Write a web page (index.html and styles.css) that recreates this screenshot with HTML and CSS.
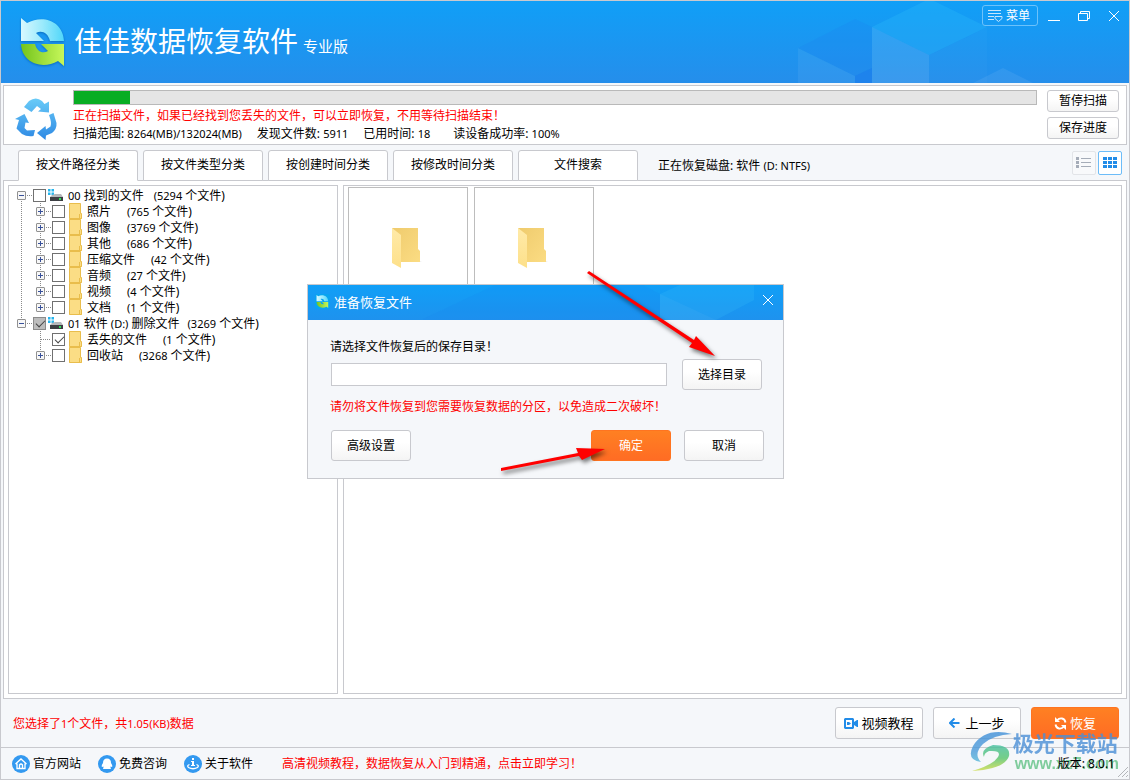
FILE: index.html
```html
<!DOCTYPE html>
<html lang="zh-CN">
<head>
<meta charset="utf-8">
<title>佳佳数据恢复软件</title>
<link rel="stylesheet" href="styles.css">
</head>
<body>
<svg class="defs" width="0" height="0" aria-hidden="true">
  <defs>
    <linearGradient id="g-blue" x1="0" y1="0" x2="1" y2="0"><stop offset="0" stop-color="#d8f8ff"/><stop offset=".5" stop-color="#9beafc"/><stop offset="1" stop-color="#4fd6fa"/></linearGradient>
    <linearGradient id="g-green" x1="0" y1="0" x2="1" y2="0"><stop offset="0" stop-color="#74c41c"/><stop offset="1" stop-color="#c6f75a"/></linearGradient>
    <linearGradient id="g-rec" gradientUnits="userSpaceOnUse" x1="0" y1="0" x2="0" y2="41"><stop offset="0" stop-color="#6accf8"/><stop offset="1" stop-color="#2f8ae4"/></linearGradient>
    <linearGradient id="g-fold" x1="0" y1="0" x2="1" y2="1"><stop offset="0" stop-color="#efcb6d"/><stop offset="1" stop-color="#fbdc83"/></linearGradient>
    <linearGradient id="g-flap" x1="0" y1="0" x2="0" y2="1"><stop offset="0" stop-color="#ffeaa8"/><stop offset="1" stop-color="#fde08a"/></linearGradient>
    <linearGradient id="g-wm" x1="0" y1="0" x2="0" y2="1"><stop offset="0" stop-color="#3f8fd8"/><stop offset=".6" stop-color="#4a9ada"/><stop offset="1" stop-color="#58b8d8"/></linearGradient>
    <linearGradient id="g-wm2" x1="0" y1="0" x2="0" y2="1"><stop offset="0" stop-color="#45bfa0"/><stop offset=".5" stop-color="#55c46c"/><stop offset="1" stop-color="#cfdc45"/></linearGradient>
    <symbol id="logo" viewBox="0 0 44 48">
      <path fill="url(#g-blue)" d="M0 0L6 5C22-4 42 3 43 23H29C27 14 20 12 15 15L23 23H0Z"/>
      <path fill="url(#g-green)" d="M43 48L37 43C21 52 1 45 0 26H14C16 34 22 36 27 33L20 26H43Z"/>
    </symbol>
    <symbol id="folder" viewBox="0 0 13 16">
      <path fill="#fbdd85" d="M0 0H11.500V10L13 11V16H0Z"/><path fill="none" stroke="#e9bd4c" d="M.5 .5H11.500V10.500H12.500V15.500H.5ZM10.500 15V11"/>
    </symbol>
    <symbol id="drive" viewBox="0 0 16 14">
      <path fill="#25b5ee" d="M0 1h2.500v2.500H0zM3.500 1H6v2.500H3.500zM0 4.500h2.500V7H0zM3.500 4.500H6V7H3.500z"/>
      <path fill="#b5b7ba" d="M4 7L7 6H13L15 9H2Z"/><path fill="#3c3f43" d="M2 9h13v4H2z"/><path fill="#2be35a" d="M11 10h2v2h-2z"/>
    </symbol>
    <symbol id="bigfolder" viewBox="0 0 30 42">
      <path fill="url(#g-fold)" d="M0 0H26V21L28 23V34H8Z"/><path fill="url(#g-flap)" d="M0 0L9 7V40L0 35Z"/><path fill="#eee" d="M28 33h2l-2 1z"/>
    </symbol>
  </defs>
</svg>
<div class="window">
  <header class="titlebar">
    <svg class="cubes" width="260" height="82" viewBox="797 1 260 82" aria-hidden="true">
      <path fill="#1c7ff0" fill-opacity=".2" d="M798 48L855 19L872 27V68L855 76Z"/>
      <path fill="#fff" fill-opacity=".06" d="M798 48L855 76V83H798Z"/>
      <path fill="#1670ee" fill-opacity=".4" d="M855 76L872 68V83H855Z"/>
      <path fill="#28b8f8" fill-opacity=".35" d="M872 27L925 1H934L987 27L929 55Z"/>
      <path fill="#fff" fill-opacity=".1" d="M872 27L929 55V83H872Z"/>
      <path fill="#fff" fill-opacity=".02" d="M929 55L987 27V83H929Z"/>
      <path fill="#fff" fill-opacity=".07" d="M973 83L1003 68L1033 83Z"/>
    </svg>
    <svg class="logo" width="44" height="48" aria-hidden="true"><use href="#logo"/></svg>
    <h1 class="brand">佳佳数据恢复软件</h1>
    <span class="edition">专业版</span>
    <div class="window-tools">
      <button class="menu-btn"><svg width="16" height="14" viewBox="0 0 16 14" fill="none" stroke="#c9e6fc"><path d="M0 1.500H13M0 4.500H13M0 7.500H6M0 10.500H6M7 7.500H14V9.500L10.500 12.500L7 9.500Z"/></svg>菜单</button>
      <button class="win-btn" aria-label="最小化"><svg width="12" height="12" stroke="#fff"><path d="M0 10.500H12"/></svg></button>
      <button class="win-btn" aria-label="还原"><svg width="12" height="12" fill="none" stroke="#fff"><path d="M.5 3.500H9.500V10.500H.5ZM2.500 3V1.500H11.500V8.500H10"/></svg></button>
      <button class="win-btn" aria-label="关闭"><svg width="12" height="12" stroke="#fff"><path d="M1 1L11 11M11 1L1 11"/></svg></button>
    </div>
  </header>

  <section class="scan">
    <svg class="recycle" width="44" height="44" viewBox="0 0 44 44" fill="url(#g-rec)" aria-hidden="true">
      <path d="M9 9L14 3Q21-2 27 3L29.500 6L34 3.500V14.500L23 13.500L26 11L22 8L16.500 14Z"/>
      <path d="M0 21L9.500 16L14 25L10.500 24.500L9.500 30L12 32.500L20 32L18.500 38Q12 39 7 36L1.500 30.500L4 22Z"/>
      <path d="M34 17L38.500 15L41.500 25Q42 31 37 35L31 37.500L30.500 42L22 35L30.500 28L31 31.500L35.500 28.500Q37 25 34 17Z"/>
    </svg>
    <div class="scan-info">
      <div class="progress" role="progressbar" aria-label="扫描进度" aria-valuenow="6"><div class="progress-fill" style="width:5.8%"></div></div>
      <p class="alert">正在扫描文件，如果已经找到您丢失的文件，可以立即恢复，不用等待扫描结束！</p>
      <p class="stats"><span>扫描范围: <span class="num">8264(MB)/132024(MB)</span></span><span>发现文件数: <span class="num">5911</span></span><span>已用时间: <span class="num">18</span></span><span class="rate">读设备成功率: <span class="num">100%</span></span></p>
    </div>
    <div class="scan-actions"><button class="btn small">暂停扫描</button><button class="btn small">保存进度</button></div>
  </section>

  <nav class="tabs">
    <button class="tab active">按文件路径分类</button><button class="tab">按文件类型分类</button><button class="tab">按创建时间分类</button><button class="tab">按修改时间分类</button><button class="tab">文件搜索</button>
    <span class="disk">正在恢复磁盘: 软件 <span class="num">(D: NTFS)</span></span>
    <button class="view" aria-label="列表"><svg width="16" height="12" fill="#a5acb8"><path d="M0 0h3v3H0zM0 4h3v3H0zM0 8h3v3H0zM5 1h10v1H5zM5 5h10v1H5zM5 9h10v1H5z"/></svg></button>
    <button class="view on" aria-label="网格"><svg width="14" height="12" fill="#228ce8"><path d="M0 0h4v3H0zM5 0h4v3H5zM10 0h4v3h-4zM0 4h4v3H0zM5 4h4v3H5zM10 4h4v3h-4zM0 8h4v3H0zM5 8h4v3H5zM10 8h4v3h-4z"/></svg></button>
  </nav>

  <main class="content">
    <div class="tree">
      <ul class="roots">
        <li>
          <div class="row"><button class="exp" aria-label="折叠"></button><i class="dots"></i><label><input type="checkbox"><svg class="drive" width="16" height="14"><use href="#drive"/></svg><span class="name"><span class="num">00</span> 找到的文件</span><span class="count"><span class="num">(5294</span> 个文件)</span></label></div>
          <ul class="kids">
            <li class="row"><button class="exp plus" aria-label="展开"></button><i class="dots"></i><label><input type="checkbox"><svg width="13" height="16"><use href="#folder"/></svg><span class="name">照片</span><span class="count"><span class="num">(765</span> 个文件)</span></label></li>
            <li class="row"><button class="exp plus" aria-label="展开"></button><i class="dots"></i><label><input type="checkbox"><svg width="13" height="16"><use href="#folder"/></svg><span class="name">图像</span><span class="count"><span class="num">(3769</span> 个文件)</span></label></li>
            <li class="row"><button class="exp plus" aria-label="展开"></button><i class="dots"></i><label><input type="checkbox"><svg width="13" height="16"><use href="#folder"/></svg><span class="name">其他</span><span class="count"><span class="num">(686</span> 个文件)</span></label></li>
            <li class="row"><button class="exp plus" aria-label="展开"></button><i class="dots"></i><label><input type="checkbox"><svg width="13" height="16"><use href="#folder"/></svg><span class="name">压缩文件</span><span class="count"><span class="num">(42</span> 个文件)</span></label></li>
            <li class="row"><button class="exp plus" aria-label="展开"></button><i class="dots"></i><label><input type="checkbox"><svg width="13" height="16"><use href="#folder"/></svg><span class="name">音频</span><span class="count"><span class="num">(27</span> 个文件)</span></label></li>
            <li class="row"><button class="exp plus" aria-label="展开"></button><i class="dots"></i><label><input type="checkbox"><svg width="13" height="16"><use href="#folder"/></svg><span class="name">视频</span><span class="count"><span class="num">(4</span> 个文件)</span></label></li>
            <li class="row"><button class="exp plus" aria-label="展开"></button><i class="dots"></i><label><input type="checkbox"><svg width="13" height="16"><use href="#folder"/></svg><span class="name">文档</span><span class="count"><span class="num">(1</span> 个文件)</span></label></li>
          </ul>
        </li>
        <li>
          <div class="row"><button class="exp" aria-label="折叠"></button><i class="dots"></i><label><input type="checkbox" class="partial" checked><svg class="drive" width="16" height="14"><use href="#drive"/></svg><span class="name"><span class="num">01</span> 软件 <span class="num">(D:)</span> 删除文件</span><span class="count tight"><span class="num">(3269</span> 个文件)</span></label></div>
          <ul class="kids">
            <li class="row"><i class="dots leaf"></i><label><input type="checkbox" checked><svg width="13" height="16"><use href="#folder"/></svg><span class="name">丢失的文件</span><span class="count"><span class="num">(1</span> 个文件)</span></label></li>
            <li class="row"><button class="exp plus" aria-label="展开"></button><i class="dots"></i><label><input type="checkbox"><svg width="13" height="16"><use href="#folder"/></svg><span class="name">回收站</span><span class="count"><span class="num">(3268</span> 个文件)</span></label></li>
          </ul>
        </li>
      </ul>
    </div>
    <div class="files">
      <div class="tile"><svg width="30" height="42"><use href="#bigfolder"/></svg></div>
      <div class="tile"><svg width="30" height="42"><use href="#bigfolder"/></svg></div>
    </div>
  </main>

  <div class="actions">
    <p class="alert">您选择了<span class="num">1</span>个文件，共<span class="num">1.05(KB)</span>数据</p>
    <button class="btn big"><svg width="14" height="11" viewBox="0 0 14 11"><path fill="#228ce8" fill-rule="evenodd" d="M1 0H9L10 1V4L13 2H14V9H13L10 7V10L9 11H1L0 10V1ZM2 2V9H8V2Z"/><path fill="#228ce8" d="M3 4H5L7 5.500L5 7H3Z"/></svg>视频教程</button>
    <button class="btn big"><svg class="back" width="11" height="10" viewBox="0 0 11 10" fill="none" stroke="#228ce8" stroke-width="2"><path d="M5.500 .5L1 5L5.500 9.500M1 5H10.500"/></svg>上一步</button>
    <button class="btn big primary"><svg width="13" height="13" viewBox="0 0 13 13"><path fill="none" stroke="#fff" stroke-width="1.800" d="M3 3.500Q5 1 8 1.500Q11 2 11.500 5.500M10 9.500Q8 12 5 11.500Q2 11 1.500 7.500"/><path fill="#fff" d="M1 0V5H6ZM12 13V8H7Z"/></svg>恢复</button>
  </div>

  <footer class="footer">
    <a href="#site"><svg width="18" height="18" viewBox="0 0 18 18" fill="none" stroke="#fff"><circle cx="9" cy="9" r="9" fill="#3399f0" stroke="none"/><path stroke-width="1.300" d="M3.500 9L9 4L14.500 9M5 8.500V13.500H13V8.500M7.500 13.500V10Q9 8 10.500 10V13.500"/></svg>官方网站</a>
    <a href="#ask"><svg width="18" height="18" viewBox="0 0 18 18"><circle cx="9" cy="9" r="9" fill="#3399f0"/><path fill="#fff" d="M9 3.500Q13 3.500 13 8Q15 11 14 12L12.500 11.500Q12.500 13 13 14H5Q5.500 13 5.500 11.500L4 12Q3 11 5 8Q5 3.500 9 3.500Z"/></svg>免费咨询</a>
    <a href="#about"><svg width="18" height="18" viewBox="0 0 18 18"><circle cx="9" cy="9" r="9" fill="#3399f0"/><path fill="#fff" d="M8 3h2v2H8zM7 6h3v4h1v1H7v-1h1V7H7z"/><path fill="none" stroke="#fff" stroke-width="1.300" d="M5.500 9.500Q2.500 10.500 4.500 12.500Q9 15 13.500 12.500Q15.500 10.500 12.500 9.500"/></svg>关于软件</a>
    <a class="promo" href="#video">高清视频教程，数据恢复从入门到精通，点击立即学习！</a>
    <span class="version">版本: 8.0.1</span>
  </footer>

  <div class="watermark">
    <svg width="44" height="42" viewBox="0 0 44 42"><path fill="url(#g-wm)" d="M43 3Q16-4 4 15Q-3 29 12 31Q4 23 14 13Q24 4 43 3Z"/><path fill="url(#g-wm2)" d="M24 14Q42 14 40 25Q36 38 3 40Q24 34 29 26Q33 19 20 20Q15 22 15 26Q11 18 24 14Z"/></svg>
    <div><p class="wm-name">极光下载站</p><p class="wm-url">www.xz7.com</p></div>
  </div>
  <svg class="grip" width="12" height="12" stroke="#b4b6ba"><path d="M1 11L11 1M5 11L11 5M9 11L11 9"/></svg>

  <div class="dialog" role="dialog" aria-labelledby="dlg-title">
    <div class="dialog-head">
      <svg class="cubes" width="440" height="35" viewBox="0 0 440 35" aria-hidden="true"><path fill="#1c7ff0" fill-opacity=".12" d="M80 34L152 0H300L317 9V35H80Z"/><path fill="#3cc3fa" fill-opacity=".2" d="M317 9L337 0H411V15L373 35L317 35Z"/><path fill="#fff" fill-opacity=".04" d="M317 9L373 35H317Z"/></svg>
      <svg class="mini" width="15" height="15" viewBox="0 0 15 15"><rect width="15" height="15" rx="2" fill="#08a4f0"/><svg x="1" y="1" width="13" height="13"><use href="#logo"/></svg></svg>
      <h2 id="dlg-title">准备恢复文件</h2>
      <button class="win-btn" aria-label="关闭对话框"><svg width="12" height="12" stroke="#fff"><path d="M1 1L11 11M11 1L1 11"/></svg></button>
    </div>
    <div class="dialog-body">
      <label for="path">请选择文件恢复后的保存目录！</label>
      <div class="path-row"><input id="path" type="text"><button class="btn medium">选择目录</button></div>
      <p class="alert">请勿将文件恢复到您需要恢复数据的分区，以免造成二次破坏！</p>
      <div class="dialog-actions"><button class="btn medium">高级设置</button><button class="btn medium primary">确定</button><button class="btn medium">取消</button></div>
    </div>
  </div>

  <svg class="arrows" width="230" height="210" viewBox="495 265 230 210" aria-hidden="true">
    <path fill="#f00" d="M589 271L587 273L692 343L689 347L715 356L696 336L694 340Z"/>
    <path fill="#f00" d="M501 468L501 471L579 456L582 460L605 449L576 448L578 453Z"/>
  </svg>
</div>
</body>
</html>
```
FILE: styles.css
```css
* { box-sizing: border-box; }
body, p, h1, h2, ul { margin: 0; padding: 0; }
body { font: 12px/16px "Noto Sans", "Noto Sans CJK SC", sans-serif; color: #000; }
button, input { font: inherit; color: inherit; margin: 0; }
button { padding: 0; border: 0; background: none; white-space: nowrap; }
a { color: inherit; text-decoration: none; }
ul { list-style: none; }
svg { flex: none; display: block; }
.defs { position: absolute; }
.num { font-size: 11px; line-height: 12px; }

.window { position: relative; display: flex; flex-direction: column; min-height: 100vh; border: 1px solid #c8c9ce; background: #f5f7fa; overflow: hidden; }
.alert { color: #f00; }

.titlebar { position: relative; display: flex; height: 82px; padding-left: 20px; color: #fff; background: linear-gradient(#109ff7, #258eeb); }
.cubes { position: absolute; top: 0; right: 72px; }
.logo { margin-top: 17px; filter: drop-shadow(0 1px 1px #0a6cc0); }
.brand { margin: 21px 0 0 9px; font-size: 28px; line-height: 38px; font-weight: 400; }
.edition { margin: 35px 0 0 5px; font-size: 15px; line-height: 20px; }
.window-tools { position: relative; display: flex; align-items: flex-start; margin-left: auto; padding: 4px 9px 0 0; gap: 18px; }
.menu-btn { display: flex; align-items: center; justify-content: center; gap: 2px; width: 56px; height: 21px; margin-right: -8px; padding-right: 2px; border: 1px solid #6cc2fb; border-radius: 3px; }
.win-btn { padding-top: 5px; }

.scan { display: flex; margin: 2px 2px 0; height: 60px; padding: 4px 7px 0 11px; border: 1px solid #c8c9ce; background: #fff; }
.recycle { margin-top: 8px; }
.scan-info { flex: 1; margin: 0 10px 0 14px; }
.progress { height: 15px; border: 1px solid #b9b9b9; background: #e5e5e5; }
.progress-fill { height: 100%; background: #08ad23; }
.scan-info p { line-height: 18px; }
.scan-info .alert { margin-top: 2px; }
.stats { display: flex; gap: 15px; }
.rate { margin-left: 8px; }
.scan-actions { display: flex; flex-direction: column; gap: 5px; }
.btn { display: flex; align-items: center; justify-content: center; border: 1px solid #c8c9ce; border-radius: 3px; background: linear-gradient(#fff 40%, #f4f4f4); }
.small { width: 72px; height: 22px; }
.medium { width: 80px; height: 31px; padding-top: 1px; }
.big { width: 88px; height: 32px; gap: 3px; font-size: 13px; }
.primary { color: #fff; border-color: #ff7420; background: linear-gradient(#ff8022, #ff6c24); }

.tabs { position: relative; z-index: 1; display: flex; gap: 5px; margin: 5px 0 -1px; padding: 0 7px 0 17px; height: 31px; }
.tab { width: 120px; padding-bottom: 1px; border: 1px solid #c8c9ce; border-radius: 3px 3px 0 0; background: #fff; }
.active { border-bottom-color: #fff; }
.disk { margin: 8px auto 0 15px; }
.view { display: flex; align-items: center; justify-content: center; width: 24px; height: 24px; margin-top: 1px; border: 1px solid #e2e4e8; border-radius: 2px; background: #f8f9fb; }
.view.on { margin-left: -3px; border-color: #6cbcf8; background: #fff; }

.content { display: flex; flex: 1; gap: 5px; margin: 0 2px; padding: 4px; border: 1px solid #c8c9ce; background: #fff; }
.tree { width: 330px; padding: 1px 0 0 8px; border: 1px solid #c8c9ce; }
.files { display: flex; flex: 1; align-items: flex-start; gap: 6px; padding: 1px 4px; border: 1px solid #c8c9ce; }
.tile { display: flex; justify-content: center; width: 120px; height: 140px; padding: 40px 2px 0 0; border: 1px solid #bdbdbd; }
.roots { background: repeating-linear-gradient(#8a8a8a 0 1px, transparent 1px 2px) 4px 8px / 1px 128px no-repeat; }
.kids { margin-left: 19px; background: repeating-linear-gradient(#8a8a8a 0 1px, transparent 1px 2px) 4px 0 / 1px calc(100% - 8px) no-repeat; }
.row { display: flex; align-items: center; height: 16px; white-space: nowrap; }
.row label { display: flex; align-items: center; }
.exp { width: 9px; height: 9px; border: 1px solid #919191; border-radius: 1px; background: linear-gradient(#38519a, #38519a) center / 5px 1px no-repeat, #f7f7f7; }
.exp.plus { background: linear-gradient(#38519a, #38519a) center / 5px 1px no-repeat, linear-gradient(#38519a, #38519a) center / 1px 5px no-repeat, #f7f7f7; }
.dots { width: 6px; height: 1px; margin-right: 1px; background: repeating-linear-gradient(90deg, transparent 0 1px, #8a8a8a 1px 2px); }
.leaf { width: 11px; margin-left: 4px; }
.row input { appearance: none; width: 13px; height: 13px; border: 1px solid #707070; background: #fff; }
.row input:checked::before { content: ""; display: block; width: 8px; height: 4px; margin: 2px 0 0 2px; border: solid #444; border-width: 0 0 1px 1px; transform: rotate(-45deg); }
.row input.partial { background: #bdbdbd; border-color: #8b8b8b; }
.row label svg { margin: 0 5px 0 4px; }
.row label .drive { margin: 0 4px 0 2px; }
.name, .count { padding-top: 1px; }
.count { margin-left: 10px; }
.count.tight { margin-left: 8px; }
.kids .count { margin-left: 16px; }

.actions { display: flex; align-items: center; gap: 10px; height: 48px; padding: 0 10px 0 12px; }
.actions .alert { flex: 1; padding-top: 2px; }
.back { margin-right: 2px; }
.footer { display: flex; align-items: center; height: 32px; padding: 0 14px 0 11px; border-top: 1px solid #c8c9ce; }
.footer a { display: flex; align-items: center; gap: 3px; margin-right: 17px; }
.footer a.promo { margin-left: 12px; color: #f00; }
.version { position: relative; z-index: 2; margin-left: auto; }
.watermark { position: absolute; right: 10px; bottom: 6px; display: flex; pointer-events: none; opacity: .8; }
.wm-name { font-size: 21px; line-height: 24px; font-weight: 700; color: #4a8fd6; }
.wm-url { padding-left: 2px; font: 700 16px/18px "Liberation Sans", sans-serif; color: #62c286; }
.grip { position: absolute; right: 0; bottom: 1px; }

.dialog { position: absolute; left: 306px; top: 283px; width: 477px; border: 1px solid #c8c9ce; background: #f5f7fa; }
.dialog-head { position: relative; display: flex; align-items: center; height: 35px; padding: 0 9px 2px 7px; color: #fff; background: linear-gradient(#109ff7, #1e92ee); }
.dialog-head .cubes { right: 0; left: 35px; }
.mini { position: relative; }
.dialog h2 { position: relative; flex: 1; margin-left: 4px; font-size: 13px; line-height: 18px; font-weight: 400; }
.dialog-head .win-btn { position: relative; padding: 0 0 3px; }
.dialog-body { padding: 19px 19px 17px 22px; }
.dialog-body label { display: block; }
.path-row { display: flex; align-items: center; gap: 15px; margin: 4px 2px 9px 1px; }
.path-row input { flex: 1; min-width: 0; height: 23px; padding: 0 4px; border: 1px solid #c8c9ce; background: #fff; }
.dialog-actions { display: flex; gap: 13px; margin: 15px 0 0 1px; }
.dialog-actions .btn:first-child { margin-right: auto; }
.arrows { position: absolute; left: 494px; top: 264px; pointer-events: none; filter: drop-shadow(2px 3px 2px #0008); }
```
